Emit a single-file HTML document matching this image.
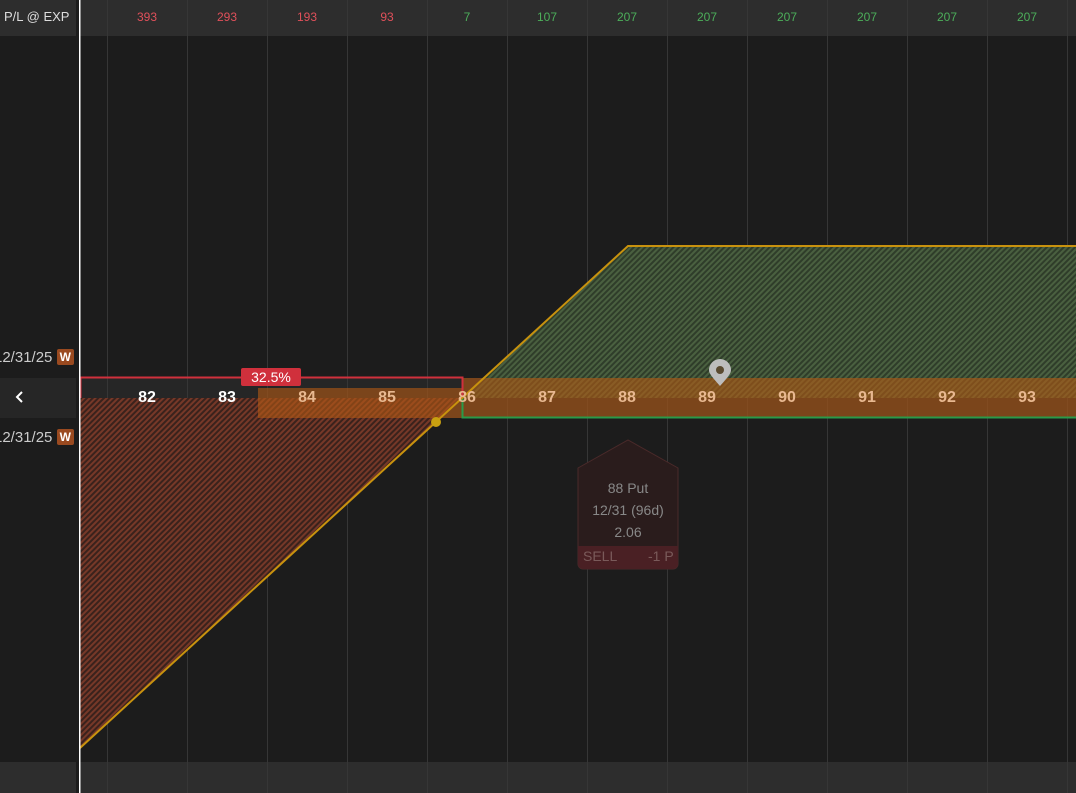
<!DOCTYPE html><html><head><style>
body{margin:0;width:1076px;height:793px;background:#1c1c1c;overflow:hidden;font-family:"Liberation Sans",sans-serif;position:relative}
.a{position:absolute}
.w{background:#9a4a20;color:#fff;font-size:12px;font-weight:bold;padding:1px 3px;border-radius:2px;position:relative;top:-1px}
</style></head><body>
<svg class="a" style="left:0;top:0" width="1076" height="793">
<defs>
<pattern id="g" width="4" height="4" patternUnits="userSpaceOnUse" patternTransform="rotate(-45)"><rect width="4" height="4" fill="#2f3d2a"/><rect width="4" height="2" fill="#4a6040"/></pattern>
<pattern id="r" width="4" height="4" patternUnits="userSpaceOnUse" patternTransform="rotate(-45)"><rect width="4" height="4" fill="#3a221c"/><rect width="4" height="2" fill="#763828"/></pattern>
</defs>
<rect x="0" y="0" width="76" height="36" fill="#2d2d2d"/>
<rect x="80" y="0" width="996" height="36" fill="#2d2d2d"/>
<rect x="0" y="762" width="76" height="31" fill="#2d2d2d"/>
<rect x="80" y="762" width="996" height="31" fill="#2d2d2d"/>
<rect x="0" y="378" width="76" height="40" fill="#262626"/>
<rect x="80" y="378" width="996" height="40" fill="#262626"/>
<g stroke="#363636" stroke-width="1">
<path d="M107.5 0V793M187.5 0V793M267.5 0V793M347.5 0V793M427.5 0V793M507.5 0V793M587.5 0V793M667.5 0V793M747.5 0V793M827.5 0V793M907.5 0V793M987.5 0V793M1067.5 0V793"/>
</g>
<polygon points="80,398 462,398 80,748" fill="url(#r)"/>
<polygon points="462,398 628,246 1076,246 1076,398" fill="url(#g)"/>
<rect x="258" y="388" width="204" height="30" fill="rgba(180,90,20,0.6)"/>
<rect x="462" y="378" width="614" height="40" fill="rgba(180,90,20,0.6)"/>
<path d="M80.5 398V377.5H462.5V398" fill="none" stroke="#d0303c" stroke-width="2"/>
<path d="M462.5 398V417.5H1076" fill="none" stroke="#2a9a4a" stroke-width="2"/>
<polyline points="80,748 628,246 1076,246" fill="none" stroke="#c8920e" stroke-width="2"/>
<circle cx="436" cy="422" r="5" fill="#c8a010"/>
<rect x="79" y="0" width="1.5" height="793" fill="#fff"/>
<path d="M720 386c-7-8-11-12-11-16a11 11 0 0 1 22 0c0 4-4 8-11 16z" fill="#bdbdbd"/><circle cx="720" cy="370" r="4" fill="#5a4a30"/>
<path d="M578 468L628 440L678 468V564a5 5 0 0 1-5 5H583a5 5 0 0 1-5-5Z" fill="#2a1c1c" stroke="#4a2a2a"/>
<path d="M578 546H678V564a5 5 0 0 1-5 5H583a5 5 0 0 1-5-5Z" fill="#4a2024"/>
<path d="M22 392l-5 5 5 5" fill="none" stroke="#fff" stroke-width="2"/>
</svg>
<div class="a" style="left:4px;top:9px;font-size:13px;color:#ddd">P/L @ EXP</div>
<div class="a" style="left:107px;top:10px;font-size:12px;width:960px;display:flex">
<span style="width:80px;text-align:center;color:#e0505a">393</span><span style="width:80px;text-align:center;color:#e0505a">293</span><span style="width:80px;text-align:center;color:#e0505a">193</span><span style="width:80px;text-align:center;color:#e0505a">93</span><span style="width:80px;text-align:center;color:#4cae5a">7</span><span style="width:80px;text-align:center;color:#4cae5a">107</span><span style="width:80px;text-align:center;color:#4cae5a">207</span><span style="width:80px;text-align:center;color:#4cae5a">207</span><span style="width:80px;text-align:center;color:#4cae5a">207</span><span style="width:80px;text-align:center;color:#4cae5a">207</span><span style="width:80px;text-align:center;color:#4cae5a">207</span><span style="width:80px;text-align:center;color:#4cae5a">207</span></div>
<div class="a" style="left:107px;top:389px;font-size:16px;font-weight:bold;width:960px;display:flex">
<span style="width:80px;text-align:center;color:#fff">82</span><span style="width:80px;text-align:center;color:#fff">83</span><span style="width:80px;text-align:center;color:#e8b890">84</span><span style="width:80px;text-align:center;color:#e8b890">85</span><span style="width:80px;text-align:center;color:#e8b890">86</span><span style="width:80px;text-align:center;color:#e8b890">87</span><span style="width:80px;text-align:center;color:#e8b890">88</span><span style="width:80px;text-align:center;color:#e8b890">89</span><span style="width:80px;text-align:center;color:#e8b890">90</span><span style="width:80px;text-align:center;color:#e8b890">91</span><span style="width:80px;text-align:center;color:#e8b890">92</span><span style="width:80px;text-align:center;color:#e8b890">93</span></div>
<div class="a" style="left:241px;top:368px;width:60px;height:18px;background:#d0303c;border-radius:2px;color:#fff;font-size:14px;text-align:center;line-height:18px">32.5%</div>
<div class="a" style="left:-6px;top:349px;font-size:15px;color:#ccc">12/31/25 <span class="w">W</span></div>
<div class="a" style="left:-6px;top:429px;font-size:15px;color:#ccc">12/31/25 <span class="w">W</span></div>
<div class="a" style="left:578px;top:477px;width:100px;text-align:center;color:#888;font-size:14px;line-height:22px">88 Put<br>12/31 (96d)<br>2.06</div>
<div class="a" style="left:583px;top:548px;font-size:14px;color:#7a5a5a">SELL</div>
<div class="a" style="left:648px;top:548px;font-size:14px;color:#7a5a5a">-1 P</div>
</body></html>
